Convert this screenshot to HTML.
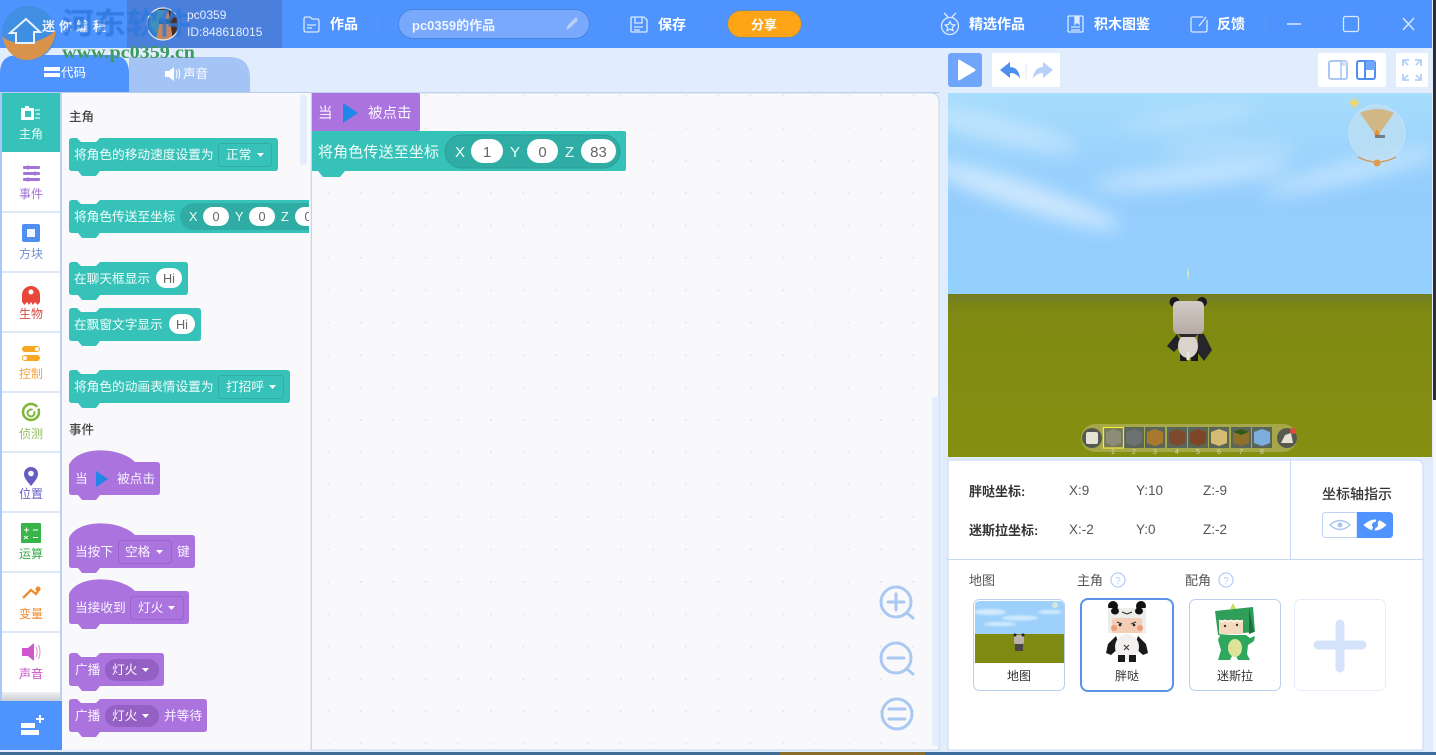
<!DOCTYPE html>
<html><head><meta charset="utf-8">
<style>
html,body{margin:0;padding:0;width:1436px;height:755px;overflow:hidden;background:#e1edfd}
svg{display:block;position:absolute;left:0;top:0;font-family:"Liberation Sans","Noto Sans CJK SC",sans-serif}
</style></head>
<body>
<svg width="1436" height="755" viewBox="0 0 1436 755" xmlns="http://www.w3.org/2000/svg">
<defs>
<filter id="b6" x="-30%" y="-150%" width="160%" height="400%"><feGaussianBlur stdDeviation="9"/></filter>
<filter id="b1"><feGaussianBlur stdDeviation="1"/></filter>
<filter id="b05"><feGaussianBlur stdDeviation="0.6"/></filter>
<linearGradient id="sky" x1="0" y1="0" x2="0" y2="1"><stop offset="0" stop-color="#a6dcfc"/><stop offset=".5" stop-color="#93cdfd"/><stop offset="1" stop-color="#93cfff"/></linearGradient>
<linearGradient id="gnd" x1="0" y1="0" x2="0" y2="1"><stop offset="0" stop-color="#77801a"/><stop offset=".12" stop-color="#7f8a12"/><stop offset="1" stop-color="#858f10"/></linearGradient>
<linearGradient id="sh" x1="0" y1="0" x2="0" y2="1"><stop offset="0" stop-color="#f0f1f3"/><stop offset="1" stop-color="#c9ccd2"/></linearGradient>
<linearGradient id="head" x1="0" y1="0" x2="0" y2="1"><stop offset="0" stop-color="#d3ccc6"/><stop offset="1" stop-color="#b5aba3"/></linearGradient>
<pattern id="dots" x="490" y="95" width="32.5" height="32.4" patternUnits="userSpaceOnUse"><rect x="0" y="0" width="1.6" height="1.6" fill="#e2e3e8"/></pattern>
<clipPath id="thumb"><path d="M975 606q0-5 5-5h79q5 0 5 5v57h-89z"/></clipPath>
<clipPath id="pal"><rect x="62" y="93" width="247" height="657"/></clipPath>
<clipPath id="av"><circle cx="163" cy="24" r="16"/></clipPath>
<clipPath id="scene"><rect x="948" y="93" width="484" height="200"/></clipPath>
</defs>

<!-- page -->
<rect width="1436" height="755" fill="#e1edfd"/>
<rect x="1433" y="0" width="3" height="400" fill="#2b2d38"/>
<rect x="1433" y="400" width="3" height="355" fill="#f4f6fa"/>
<rect x="0" y="752" width="780" height="3" fill="#3f6d96"/>
<rect x="780" y="752" width="145" height="3" fill="#8a6d2c"/>
<rect x="925" y="752" width="511" height="3" fill="#3c6ca0"/>

<!-- top bar -->
<rect x="0" y="0" width="1432" height="48" fill="#4f94fe"/>
<rect x="127" y="0" width="155" height="48" fill="#4a7fdc"/>

<!-- avatar -->
<g clip-path="url(#av)">
<rect x="147" y="8" width="32" height="32" fill="#2f3a44"/>
<path d="M150 18q10-10 22-6l4 10-4 18h-18z" fill="#c9875f"/>
<path d="M150 10h16l-6 12-4 18h-8z" fill="#3f8fb8"/>
<rect x="159" y="19" width="14" height="5" fill="#2b6f94"/>
<path d="M168 8h11v32h-6z" fill="#4a2e22"/>
</g>
<circle cx="163" cy="24" r="16" fill="none" stroke="#e9edf4" stroke-width="1.2"/>
<g font-size="12">
<text x="187" y="19" fill="#e6effe">pc0359</text>
<text x="187" y="36" fill="#e6effe">ID:848618015</text>
</g>

<!-- topbar icons & labels -->
<g fill="none" stroke="#dbe9ff" stroke-width="1.3">
<path d="M304 19q0-2 2-2h4l2 2h5q2 0 2 2v9q0 2-2 2h-11q-2 0-2-2z"/><path d="M307 25h9M307 28h5"/>
<path d="M632 17h12l3 3v11q0 1-1 1h-14q-1 0-1-1V18q0-1 1-1z"/><path d="M635 17v6h7v-6M634 27h9M634 30h6" />
<circle cx="950" cy="26" r="8.5"/><path d="M950 21.500l1.500 3 3.300.5-2.400 2.300.6 3.300-3-1.600-3 1.600.6-3.300-2.400-2.300 3.300-.5z"/><path d="M944 13l4 4M956 13l-4 4"/>
<rect x="1068" y="16" width="15" height="16" rx="1"/><path d="M1071 27h9M1071 30h9"/><path d="M1075 16v8l2-2 2 2v-8" fill="#dbe9ff"/>
<path d="M1207 20v10q0 2-2 2h-12q-2 0-2-2V19q0-2 2-2h10"/><path d="M1199 26l7-9" />
<path d="M1287 24h14" stroke-width="1.500"/>
<rect x="1343.500" y="16.500" width="15" height="15" rx="2"/>
<path d="M1403 18l11 12M1414 18l-11 12" stroke-width="1.400"/>
</g>
<g stroke="#5f97ee" stroke-width="1" opacity=".7">
<path d="M377 15v17M610 15v17M706 15v17M1045 15v17M1170 15v17M1265 15v17M1322 15v17M1379 15v17"/>
</g>
<g fill="#fff" font-size="14" font-weight="700">
<text x="330" y="29">作品</text>
<rect x="398.500" y="9.500" width="191" height="29" rx="14.500" fill="#78a9fc" stroke="#4a82de"/>
<text x="412" y="30" fill="#eef4ff" font-size="13">pc0359的作品</text>
<text x="658" y="29.500">保存</text>
<rect x="727.500" y="10.500" width="74" height="27" rx="13.500" fill="#fda514" stroke="#6f8da8"/>
<text x="751" y="29.500" font-size="13">分享</text>
<text x="969" y="29">精选作品</text>
<text x="1094" y="29">积木图鉴</text>
<text x="1217" y="29">反馈</text>
</g>
<path d="M566 30l2-5 8-8 2 3-8 8z" fill="#b6d0fb"/>

<!-- tabs -->
<path d="M0 92V73q0-18 18-18h93q18 0 18 18v19z" fill="#4f94fe"/>
<path d="M129 57h100q21 0 21 21v14H129z" fill="#a3c4f5"/>
<path d="M44 67h16v4H44zM44 73h16v4H44z" fill="#fff"/>
<text x="61" y="77" font-size="12.500" fill="#fff">代码</text>
<path d="M165 71h4l5-4v14l-5-4h-4z" fill="#fff"/>
<path d="M176 70q2 4 0 8M178.500 69q2.500 5 0 10" stroke="#fff" fill="none"/>
<text x="183" y="78" font-size="12.500" fill="#fff">声音</text>
<rect x="0" y="92" width="940" height="1" fill="#b7cdef"/>

<!-- watermark overlay (sits above top bar and tabs) -->
<circle cx="29" cy="33" r="27" fill="#3d8ddc" opacity=".8"/>
<path d="M2 36C14 48 42 44 56 30 54 50 40 60 27 60 14 60 5 50 2 36z" fill="#d8924a"/>
<path d="M10 33 26 19l14 13h-6v11H16V33z" fill="#3f8fe0" stroke="#e7f1fc" stroke-width="2"/>
<text x="42" y="31" font-size="13" font-weight="700" fill="#fff" opacity=".9" textLength="64">迷你编程</text>
<text x="62" y="34" font-size="30" font-weight="700" fill="#2f78dc" opacity=".85" textLength="128" lengthAdjust="spacingAndGlyphs" filter="url(#b05)">河东软件</text>
<text x="62" y="58" font-family="Liberation Serif,serif" font-size="18" font-weight="700" fill="#3f9a60" textLength="133" lengthAdjust="spacingAndGlyphs">www.pc0359.cn</text>

<!-- left sidebar -->
<rect x="0" y="93" width="2" height="608" fill="#a9c7f7"/>
<rect x="2" y="93" width="58" height="608" fill="#fff"/>
<rect x="60" y="93" width="2" height="608" fill="#bcd2f5"/>
<rect x="2" y="93" width="58" height="59" fill="#37c2b9"/>
<path d="M2 212h58M2 272h58M2 332h58M2 392h58M2 452h58M2 512h58M2 572h58M2 632h58" stroke="#bdd0ee" stroke-width="1"/>
<rect x="2" y="692" width="58" height="9" fill="url(#sh)"/>
<rect x="0" y="701" width="62" height="49" fill="#4f94fe"/>
<path d="M21 723h14v5H21zM21 730h18v5H21z" fill="#fff"/>
<path d="M36 718h3v-3h2v3h3v2h-3v3h-2v-3h-3z" fill="#fff"/>

<g font-size="12" text-anchor="middle">
<text x="31" y="138" fill="#e9fbf9">主角</text>
<text x="31" y="198" fill="#a473d8">事件</text>
<text x="31" y="258" fill="#6d92d8">方块</text>
<text x="31" y="318" fill="#db4b3f">生物</text>
<text x="31" y="378" fill="#f4a23c">控制</text>
<text x="31" y="438" fill="#8fbf5a">侦测</text>
<text x="31" y="498" fill="#6a60c4">位置</text>
<text x="31" y="558" fill="#38ad4a">运算</text>
<text x="31" y="618" fill="#ef8a2e">变量</text>
<text x="31" y="678" fill="#c64fc4">声音</text>
</g>
<!-- side icons -->
<path d="M22 108h3v-2h4v2h4q1 0 1 1v10q0 1-1 1H22q-1 0-1-1v-10q0-1 1-1z" fill="#fff"/><rect x="25" y="111" width="6" height="6" fill="#37c2b9"/>
<path d="M35 110h5M36 114h4M35 118h5" stroke="#fff" fill="none"/>
<g fill="#a473d8"><rect x="23" y="166" width="17" height="3" rx="1"/><rect x="23" y="172" width="17" height="3" rx="1"/><rect x="23" y="178" width="17" height="3" rx="1"/><circle cx="28" cy="167.500" r="2"/><circle cx="35" cy="173.500" r="2"/><circle cx="28" cy="179.500" r="2"/></g>
<rect x="22" y="224" width="18" height="18" rx="2" fill="#4f8ff2"/><rect x="27" y="229" width="8" height="8" fill="#f0f5ff"/>
<path d="M22 302v-7a9 9 0 0 1 18 0v7l-2.500 3-2.500-3-2 3-2-3-2 3-2-3-2.500 3z" fill="#e8483a"/><circle cx="31" cy="292" r="2.500" fill="#fff"/>
<rect x="22" y="346" width="18" height="6" rx="3" fill="#f9a620"/><rect x="22" y="355" width="18" height="6" rx="3" fill="#f9a620"/><circle cx="37" cy="349" r="2" fill="#fff"/><circle cx="25" cy="358" r="2" fill="#fff"/>
<circle cx="31" cy="412" r="8" fill="none" stroke="#7fb636" stroke-width="2.500"/><circle cx="31" cy="413" r="3.500" fill="none" stroke="#7fb636" stroke-width="2"/><path d="M31 412l8-5" stroke="#fff" stroke-width="2"/>
<path d="M31 486c-4-5-7-8-7-12a7 7 0 0 1 14 0c0 4-3 7-7 12z" fill="#675cc2"/><circle cx="31" cy="473.500" r="2.800" fill="#fff"/>
<rect x="21" y="523" width="20" height="20" rx="1" fill="#38b449"/>
<path d="M24 530h5M26.500 527.500v5M33 530h5M24 536l4 3M28 536l-4 3M33 537.500h5" stroke="#fff" stroke-width=".9"/>
<path d="M23 598l8-8 5 4 4-6" fill="none" stroke="#f08a2e" stroke-width="2.300"/><circle cx="38" cy="589" r="2.500" fill="#f08a2e"/>
<path d="M22 648h6l6-5v18l-6-5h-6z" fill="#cf56cc"/><path d="M36 647q2.500 5 0 10M38.500 645q3 7 0 14" stroke="#d98fd8" fill="none"/>

<!-- palette -->
<rect x="62" y="93" width="248" height="657" fill="#f9f9fb"/>
<rect x="300" y="95" width="7" height="70" rx="3" fill="#e3edfb"/>
<text x="69" y="121" font-size="12.500" font-weight="500" fill="#444">主角</text>
<text x="69" y="434" font-size="12.500" font-weight="500" fill="#444">事件</text>

<g clip-path="url(#pal)" font-size="12.700" fill="#f2fdfb">
<path transform="translate(69 138)" d="M3 0h5l4 4h15l4-4H206q3 0 3 3v27q0 3-3 3H31l-4 5H13l-4-5H3q-3 0-3-3V3q0-3 3-3z" fill="#37c2b9"/>
<text x="74" y="159">将角色的移动速度设置为</text>
<rect x="218.500" y="143.500" width="53" height="23" rx="3" fill="#37c2b9" stroke="#2eaea6"/>
<text x="226" y="159">正常</text><path d="M257 153h7l-3.500 4z" fill="#fff"/>

<path transform="translate(69 200)" d="M3 0h5l4 4h15l4-4H300q3 0 3 3v27q0 3-3 3H31l-4 5H13l-4-5H3q-3 0-3-3V3q0-3 3-3z" fill="#37c2b9"/>
<text x="74" y="221">将角色传送至坐标</text>
<rect x="180" y="203" width="150" height="27" rx="13.500" fill="#2fada5"/>
<text x="189" y="221">X</text><rect x="203" y="207" width="26" height="19" rx="9.500" fill="#fff"/><text x="216" y="221" text-anchor="middle" fill="#666">0</text>
<text x="235" y="221">Y</text><rect x="249" y="207" width="26" height="19" rx="9.500" fill="#fff"/><text x="262" y="221" text-anchor="middle" fill="#666">0</text>
<text x="281" y="221">Z</text><rect x="295" y="207" width="26" height="19" rx="9.500" fill="#fff"/><text x="308" y="221" text-anchor="middle" fill="#666">0</text>

<path transform="translate(69 262)" d="M3 0h5l4 4h15l4-4H116q3 0 3 3v27q0 3-3 3H31l-4 5H13l-4-5H3q-3 0-3-3V3q0-3 3-3z" fill="#37c2b9"/>
<text x="74" y="283">在聊天框显示</text>
<rect x="156" y="268" width="26" height="20" rx="10" fill="#fff"/><text x="169" y="283" text-anchor="middle" fill="#666">Hi</text>

<path transform="translate(69 308)" d="M3 0h5l4 4h15l4-4H129q3 0 3 3v27q0 3-3 3H31l-4 5H13l-4-5H3q-3 0-3-3V3q0-3 3-3z" fill="#37c2b9"/>
<text x="74" y="329">在飘窗文字显示</text>
<rect x="169" y="314" width="26" height="20" rx="10" fill="#fff"/><text x="182" y="329" text-anchor="middle" fill="#666">Hi</text>

<path transform="translate(69 370)" d="M3 0h5l4 4h15l4-4H218q3 0 3 3v27q0 3-3 3H31l-4 5H13l-4-5H3q-3 0-3-3V3q0-3 3-3z" fill="#37c2b9"/>
<text x="74" y="391">将角色的动画表情设置为</text>
<rect x="218.500" y="375.500" width="65" height="23" rx="3" fill="#37c2b9" stroke="#2eaea6"/>
<text x="226" y="391">打招呼</text><path d="M269 385h7l-3.500 4z" fill="#fff"/>
</g>

<g font-size="12.700" fill="#f9f4ff">
<path transform="translate(69 462)" d="M0 3C8-16 50-16 66 0H88q3 0 3 3v27q0 3-3 3H31l-4 5H13l-4-5H3q-3 0-3-3z" fill="#aa73de"/>
<text x="75" y="483">当</text><path d="M96 471l12 8-12 8z" fill="#1e87e8"/><text x="117" y="483">被点击</text>

<path transform="translate(69 535)" d="M0 3C8-16 50-16 66 0H123q3 0 3 3v27q0 3-3 3H31l-4 5H13l-4-5H3q-3 0-3-3z" fill="#aa73de"/>
<text x="75" y="556">当按下</text>
<rect x="118.500" y="540.500" width="53" height="23" rx="3" fill="#aa73de" stroke="#9a64cd"/>
<text x="125" y="556">空格</text><path d="M156 550h7l-3.500 4z" fill="#fff"/>
<text x="177" y="556">键</text>

<path transform="translate(69 591)" d="M0 3C8-16 50-16 66 0H117q3 0 3 3v27q0 3-3 3H31l-4 5H13l-4-5H3q-3 0-3-3z" fill="#aa73de"/>
<text x="75" y="612">当接收到</text>
<rect x="130.500" y="596.500" width="53" height="23" rx="3" fill="#aa73de" stroke="#9a64cd"/>
<text x="138" y="612">灯火</text><path d="M168 606h7l-3.500 4z" fill="#fff"/>

<path transform="translate(69 653)" d="M3 0h5l4 4h15l4-4H92q3 0 3 3v27q0 3-3 3H31l-4 5H13l-4-5H3q-3 0-3-3V3q0-3 3-3z" fill="#aa73de"/>
<text x="75" y="674">广播</text>
<rect x="105" y="659" width="54" height="22" rx="11" fill="#9560c4"/>
<text x="112" y="674">灯火</text><path d="M142 668h7l-3.500 4z" fill="#fff"/>

<path transform="translate(69 699)" d="M3 0h5l4 4h15l4-4H135q3 0 3 3v27q0 3-3 3H31l-4 5H13l-4-5H3q-3 0-3-3V3q0-3 3-3z" fill="#aa73de"/>
<text x="75" y="720">广播</text>
<rect x="105" y="705" width="54" height="22" rx="11" fill="#9560c4"/>
<text x="112" y="720">灯火</text><path d="M142 714h7l-3.500 4z" fill="#fff"/>
<text x="164" y="720">并等待</text>
</g>

<!-- workspace -->
<rect x="310" y="93" width="1" height="657" fill="#e8eefa"/>
<path d="M311.500 750V93H930q9 0 9 9v648z" fill="#f9f9fb" stroke="#c6d6f1"/>
<rect x="312" y="94" width="620" height="656" fill="url(#dots)"/>
<rect x="932" y="397" width="7" height="349" fill="#e4eefc"/>

<path d="M312 93h106q2 0 2 2v34q0 2-2 2h-75l-5 6h-16l-5-6h-5z" fill="#aa73de"/>
<text x="318" y="118" font-size="14.500" fill="#f9f4ff">当</text>
<path d="M343 103l15 10-15 10z" fill="#1e87e8"/>
<text x="368" y="118" font-size="14.500" fill="#f9f4ff">被点击</text>
<path d="M312 131h8l5 0h299q2 0 2 2v36q0 2-2 2H345l-5 6h-17l-5-6h-6z" fill="#37c2b9"/>
<text x="318" y="157" font-size="15" fill="#f2fdfb" textLength="121">将角色传送至坐标</text>
<rect x="445" y="135" width="175" height="33" rx="16.500" fill="#2fada5" stroke="#2a9d96"/>
<g font-size="15" fill="#f2fdfb">
<text x="455" y="157">X</text><rect x="471" y="139" width="32" height="24" rx="12" fill="#fff"/><text x="487" y="157" text-anchor="middle" fill="#666">1</text>
<text x="510" y="157">Y</text><rect x="527" y="139" width="31" height="24" rx="12" fill="#fff"/><text x="542.500" y="157" text-anchor="middle" fill="#666">0</text>
<text x="565" y="157">Z</text><rect x="581" y="139" width="35" height="24" rx="12" fill="#fff"/><text x="598.500" y="157" text-anchor="middle" fill="#666">83</text>
</g>

<!-- zoom icons -->
<g fill="none" stroke="#a9c8f2" stroke-width="3" stroke-linecap="round">
<circle cx="896" cy="602" r="15"/><path d="M888 602h16M896 594v16M907 613l6 5"/>
<circle cx="896" cy="658" r="15"/><path d="M888 658h16M907 669l6 5"/>
<circle cx="897" cy="714" r="15"/><path d="M889 709h16M889 719h16"/>
</g>

<!-- scene toolbar -->
<rect x="948" y="53" width="34" height="34" rx="3" fill="#6fa5fb"/>
<path d="M958 61q0-2 2-1l15 9q1 1 0 2l-15 9q-2 1-2-1z" fill="#fff"/>
<rect x="992" y="53" width="68" height="34" rx="2" fill="#fff"/>
<path d="M1000 70l10-8v5q9 0 10 12-3-6-10-6v5z" fill="#4f8ff2"/>
<rect x="1025.500" y="63" width="1" height="16" fill="#dde7f5"/>
<path d="M1053 70l-10-8v5q-9 0-10 12 3-6 10-6v5z" fill="#b7d0f8"/>
<rect x="1318" y="53" width="68" height="34" rx="2" fill="#fff"/>
<rect x="1329" y="61" width="18" height="18" rx="2" fill="#fff" stroke="#a9c8f2" stroke-width="2"/><rect x="1341" y="61" width="6" height="5" fill="#cfe0fa"/><path d="M1341 61v18" stroke="#a9c8f2" stroke-width="1.500"/>
<rect x="1357" y="61" width="18" height="18" rx="2" fill="#fff" stroke="#4f8ff2" stroke-width="2"/><path d="M1365 61h10v9h-10z" fill="#6fa5fb"/><path d="M1365 61v18" stroke="#4f8ff2" stroke-width="2"/>
<rect x="1396" y="53" width="32" height="34" rx="2" fill="#fff"/>
<g fill="none" stroke="#b5cff5" stroke-width="1.800"><path d="M1403 66v-6h6M1403 60l5 5M1421 66v-6h-6M1421 60l-5 5M1403 74v6h6M1403 80l5-5M1421 74v6h-6M1421 80l-5-5"/></g>

<!-- 3D scene -->
<rect x="948" y="93" width="484" height="201" fill="url(#sky)"/>
<g clip-path="url(#scene)" fill="#fff" filter="url(#b6)">
<ellipse cx="1000" cy="130" rx="80" ry="12" opacity=".35" transform="rotate(14 1000 130)"/>
<ellipse cx="1190" cy="118" rx="70" ry="9" opacity=".22" transform="rotate(-8 1190 118)"/>
<ellipse cx="1025" cy="196" rx="100" ry="13" opacity=".55" transform="rotate(18 1025 196)"/>
<ellipse cx="1190" cy="176" rx="100" ry="11" opacity=".42" transform="rotate(-6 1190 176)"/>
<ellipse cx="1350" cy="172" rx="90" ry="10" opacity=".4" transform="rotate(-14 1350 172)"/>
<ellipse cx="1230" cy="148" rx="70" ry="9" opacity=".22"/>
</g>
<rect x="948" y="294" width="484" height="163" fill="url(#gnd)"/>
<rect x="948" y="294" width="484" height="8" fill="#6f7e2c" opacity=".5"/>
<!-- compass -->
<path d="M1351 101l1-5 1 5 4-3-3 4 5 1-5 1 3 4-4-3-1 5-1-5-4 3 3-4-5-1 5-1-3-4z" fill="#f7d65a" transform="translate(2 0)"/>
<circle cx="1377" cy="133" r="28" fill="#bfe0f3" opacity=".75" stroke="#cfe6f5"/>
<path d="M1360 113q17-8 34 0l-17 24z" fill="#d5b27a" opacity=".9"/>
<path d="M1377 129l3 6h-6z" fill="#e98a2a"/>
<rect x="1375" y="135" width="10" height="3" fill="#555" opacity=".7"/>
<path d="M1358 157q19 10 38 0" fill="none" stroke="#d29a5a" stroke-width="1.300"/>
<circle cx="1377" cy="163" r="3.500" fill="#e39a4a"/>
<!-- spark -->
<path d="M1188 267l1 6-1 9-1-9z" fill="#e8eea8" opacity=".8"/>
<!-- panda -->
<g>
<circle cx="1174.500" cy="302" r="5" fill="#1b1a1c"/><circle cx="1202" cy="302" r="5" fill="#1b1a1c"/>
<path d="M1177 334l-10 12 7 6 8-8z" fill="#232226"/>
<path d="M1198 334h6l8 16-8 11-7-9z" fill="#26262a"/>
<rect x="1180" y="351" width="7" height="10" fill="#1b1a1c"/><rect x="1191" y="351" width="7" height="10" fill="#1b1a1c"/>
<ellipse cx="1188" cy="346" rx="10" ry="12" fill="#d9d3cb"/>
<rect x="1173" y="301" width="31" height="33" rx="5" fill="url(#head)"/>
<path d="M1178 334h20l-3 3h-14z" fill="#2a282b"/>
<rect x="1186.500" y="352" width="3" height="8" fill="#e9e5da"/>
</g>
<!-- hotbar -->
<rect x="1081" y="424" width="216" height="28" rx="14" fill="#a5a748"/>
<g>
<rect x="1124" y="427" width="20" height="21" fill="#5a6758"/><rect x="1145" y="427" width="20" height="21" fill="#5a6758"/><rect x="1167" y="427" width="20" height="21" fill="#5a6758"/><rect x="1188" y="427" width="20" height="21" fill="#5a6758"/><rect x="1209" y="427" width="20" height="21" fill="#5a6758"/><rect x="1231" y="427" width="20" height="21" fill="#5a6758"/><rect x="1252" y="427" width="20" height="21" fill="#5a6758"/>
<rect x="1103.500" y="427.500" width="20" height="20.500" fill="#77795a" stroke="#f2ec3a" stroke-width="1.200"/>
<path d="M1106 432l7-3 8 3v11l-8 3-7-3z" fill="#8b8d78"/>
<path d="M1126 432l8-3 8 3v11l-8 3-8-3z" fill="#6d7270"/>
<path d="M1147 432l8-3 8 3v11l-8 3-8-3z" fill="#a9792e"/>
<path d="M1169 432l8-3 8 3v11l-8 3-8-3z" fill="#7e4a2e"/>
<path d="M1190 432l8-3 8 3v11l-8 3-8-3z" fill="#7e4526"/>
<path d="M1211 432l8-3 8 3v11l-8 3-8-3z" fill="#d6bb72"/>
<path d="M1233 432l8-3 8 3v11l-8 3-8-3z" fill="#8f6f2c"/><path d="M1233 432l8-3 8 3-8 3z" fill="#2f5b18"/>
<path d="M1254 432l8-3 8 3v11l-8 3-8-3z" fill="#7eaedb"/>
</g>
<g font-size="7" fill="#d8d8b8" text-anchor="middle">
<text x="1113" y="454">1</text><text x="1134" y="454">2</text><text x="1155" y="454">3</text><text x="1177" y="454">4</text><text x="1198" y="454">5</text><text x="1219" y="454">6</text><text x="1241" y="454">7</text><text x="1262" y="454">8</text>
</g>
<circle cx="1092" cy="438" r="10" fill="#55594f"/><rect x="1086" y="432" width="12" height="12" rx="2" fill="#e4e2d2"/>
<circle cx="1287" cy="438" r="10" fill="#55594f"/><path d="M1281 443l4-8 6-2 2 10z" fill="#e4e2d2"/><circle cx="1293" cy="431" r="3" fill="#e24a3c"/>

<!-- info panel -->
<path d="M948 460h468q7 0 7 7v283H948z" fill="#fff" stroke="#c7d9f2"/>
<path d="M948 559.500h475M1290.500 460v99" stroke="#c7d9f2"/>
<g font-size="13" fill="#333">
<text x="969" y="496" font-weight="700">胖哒坐标:</text>
<text x="969" y="535" font-weight="700">迷斯拉坐标:</text>
<g font-size="13.500" fill="#555"><text x="1069" y="495">X:9</text><text x="1136" y="495">Y:10</text><text x="1203" y="495">Z:-9</text>
<text x="1069" y="534">X:-2</text><text x="1136" y="534">Y:0</text><text x="1203" y="534">Z:-2</text></g>
<text x="1322" y="499" font-size="14" font-weight="500">坐标轴指示</text>
<g fill="#555"><text x="969" y="585">地图</text><text x="1077" y="585">主角</text><text x="1185" y="585">配角</text></g>
</g>
<path d="M1326 512.500h31v25h-31q-3.500 0-3.500-3.500v-18q0-3.500 3.500-3.500z" fill="#fff" stroke="#bcd3f3"/>
<path d="M1357 512h32q4 0 4 4v18q0 4-4 4h-32z" fill="#4f94fe"/>
<path d="M1330 525q10-9 20 0-10 9-20 0z" fill="none" stroke="#a9c8f2" stroke-width="1.500"/><circle cx="1340" cy="525" r="2.500" fill="#a9c8f2"/>
<path d="M1365 525q10-9 20 0-10 9-20 0z" fill="#fff" stroke="#fff" stroke-width="2"/><circle cx="1375" cy="525" r="3" fill="#4f94fe"/><path d="M1379 517l-7 16" stroke="#4f94fe" stroke-width="2.500"/>
<g fill="none" stroke="#b7d0f5" stroke-width="1.300"><circle cx="1118" cy="580" r="7"/><circle cx="1226" cy="580" r="7"/></g>
<g font-size="10" fill="#b7d0f5" text-anchor="middle"><text x="1118" y="584">?</text><text x="1226" y="584">?</text></g>

<!-- cards -->
<rect x="973.500" y="599.500" width="91" height="91" rx="6" fill="#fff" stroke="#b9cfee"/>
<g clip-path="url(#thumb)">
<rect x="975" y="601" width="89" height="35" fill="#9dd1fb"/>
<g fill="#fff" filter="url(#b1)" opacity=".55"><ellipse cx="990" cy="612" rx="16" ry="3"/><ellipse cx="1020" cy="618" rx="18" ry="2.500"/><ellipse cx="1050" cy="612" rx="12" ry="2"/><ellipse cx="1000" cy="624" rx="16" ry="2"/></g>
<rect x="975" y="634" width="89" height="29" fill="#7f8a12"/>
<rect x="1014" y="635" width="10" height="9" rx="2" fill="#bdb3ac"/><rect x="1015" y="644" width="8" height="7" fill="#4a4642"/><circle cx="1015" cy="635" r="1.500" fill="#222"/><circle cx="1023" cy="635" r="1.500" fill="#222"/>
<circle cx="1055" cy="605" r="3" fill="#d6e4d8"/>
</g>
<text x="1019" y="680" font-size="12" fill="#333" text-anchor="middle">地图</text>

<rect x="1081" y="599" width="92" height="92" rx="7" fill="#fff" stroke="#5b92e8" stroke-width="2"/>
<!-- panda figure -->
<g>
<circle cx="1113" cy="606" r="5" fill="#111"/><circle cx="1141" cy="606" r="5" fill="#111"/>
<path d="M1116 636l-8 8-2 9 5 2 9-8zM1138 636l8 8 2 9-5 2-9-8z" fill="#1a1a1a"/>
<ellipse cx="1127" cy="647" rx="12" ry="13" fill="#f3f1ef"/>
<path d="M1118 655h7v7h-7zM1129 655h7v7h-7z" fill="#1a1a1a"/>
<path d="M1108 608h38v25h-38z" fill="#ececea"/>
<ellipse cx="1115" cy="611" rx="4" ry="3.500" fill="#111"/><ellipse cx="1139" cy="611" rx="4" ry="3.500" fill="#111"/>
<path d="M1122 612l5 2 5-2" fill="none" stroke="#222"/>
<rect x="1112" y="618" width="30" height="15" rx="2" fill="#f3cdb5"/>
<circle cx="1114" cy="628" r="3" fill="#ef9c78"/><circle cx="1140" cy="628" r="3" fill="#ef9c78"/>
<path d="M1117 622l5 2M1136 622l-5 2" stroke="#333" stroke-width="1.200"/><circle cx="1120" cy="625" r="1.300" fill="#222"/><circle cx="1134" cy="625" r="1.300" fill="#222"/>
<path d="M1124 645l5 5M1129 645l-5 5" stroke="#333"/>
</g>
<text x="1127" y="680" font-size="12" fill="#333" text-anchor="middle">胖哒</text>

<rect x="1189.500" y="599.500" width="91" height="91" rx="6" fill="#fff" stroke="#b9cfee"/>
<!-- dino figure -->
<g>
<path d="M1233 603l3 6h-6z" fill="#c8df5a"/>
<path d="M1215 611l38-4 2 25-37 3z" fill="#2f9e58"/>
<path d="M1249 608l5 24-5 2z" fill="#1f6e3e"/>
<rect x="1219" y="620" width="24" height="14" rx="1" fill="#f4d9bc"/>
<path d="M1219 620l3 2 3-2 3 2 3-2 3 2 3-2 3 2 3-2" fill="none" stroke="#fff"/>
<circle cx="1225" cy="626" r="1.200" fill="#333"/><circle cx="1237" cy="625" r="1.200" fill="#333"/>
<path d="M1220 635h26l4 3 5-2-1 5-6 4-1 9 3 6h-12l-2-4-4 0-2 4h-12l3-10-3-10z" fill="#2fa85e"/>
<ellipse cx="1235" cy="648" rx="7" ry="9" fill="#dfe39a"/>
</g>
<text x="1235" y="680" font-size="12" fill="#333" text-anchor="middle">迷斯拉</text>

<rect x="1294.500" y="599.500" width="91" height="91" rx="6" fill="#fff" stroke="#e4edf9"/>
<path d="M1340 624v44M1318 645h44" fill="none" stroke="#d4e3fa" stroke-width="9" stroke-linecap="round"/>
</svg>
</body></html>
